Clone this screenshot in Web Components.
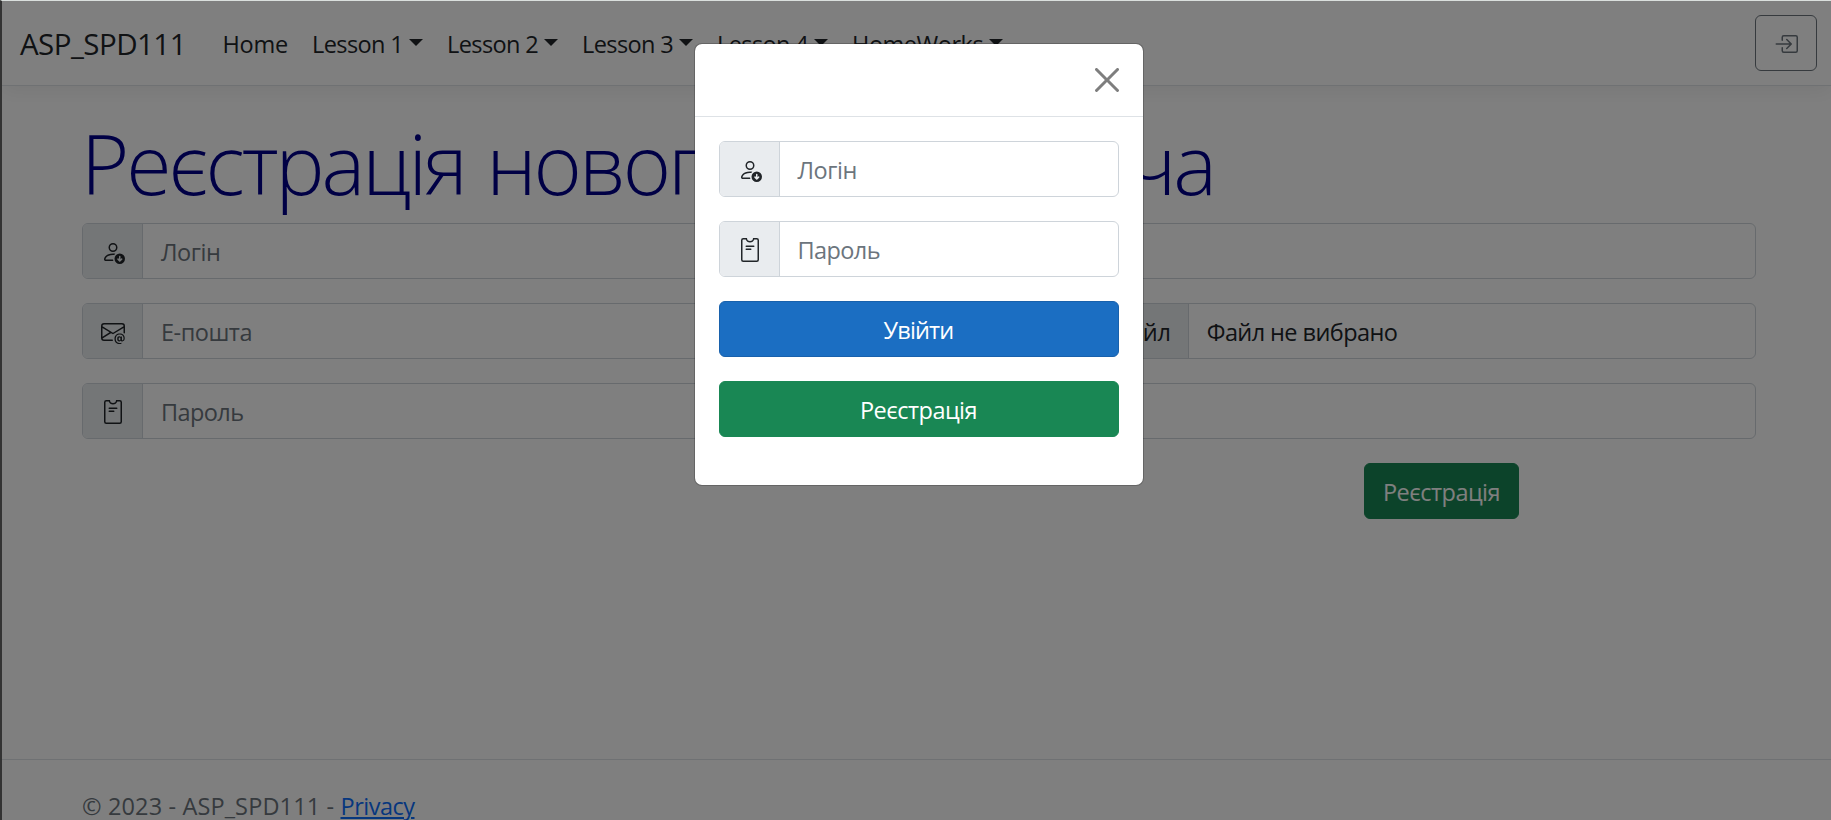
<!DOCTYPE html>
<html lang="uk">
<head>
<meta charset="utf-8">
<title>ASP_SPD111</title>
<style>
html,body{margin:0;height:100%;overflow:hidden}
body{font-family:"Open Sans","Noto Sans",sans-serif;font-size:23.5px;line-height:36px;color:#212529;background:#fff}
</style>
</head>
<body>
<app-shell></app-shell>
<script>
const define=(name,html,setup)=>customElements.define(name,class extends HTMLElement{
  constructor(){super();this.attachShadow({mode:'open'}).innerHTML=html;}
  connectedCallback(){if(setup)setup(this,this.shadowRoot);}
});

const ICONS={
 person:'<path d="M12.5 16a3.5 3.5 0 1 0 0-7 3.5 3.5 0 0 0 0 7Zm.354-1.646a.5.5 0 0 1-.722-.016l-1.149-1.25a.5.5 0 1 1 .737-.676l.28.305V11a.5.5 0 0 1 1 0v1.793l.396-.397a.5.5 0 0 1 .708.708l-1.25 1.25ZM11 5a3 3 0 1 1-6 0 3 3 0 0 1 6 0ZM8 7a2 2 0 1 0 0-4 2 2 0 0 0 0 4Z"/><path d="M8.256 14a4.474 4.474 0 0 1-.229-1.004H3c.001-.246.154-.986.832-1.664C4.484 10.68 5.711 10 8 10c.26 0 .507.009.74.025.226-.341.496-.65.804-.918C9.077 9.038 8.564 9 8 9c-5 0-6 3-6 4s1 1 1 1h5.256Z"/>',
 mail:'<path d="M2 2a2 2 0 0 0-2 2v8.01A2 2 0 0 0 2 14h5.5a.5.5 0 0 0 0-1H2a1 1 0 0 1-.966-.741l5.64-3.471L8 9.583l7-4.2V8.5a.5.5 0 0 0 1 0V4a2 2 0 0 0-2-2H2Zm3.708 6.208L1 11.105V5.383l4.708 2.825ZM1 4.217V4a1 1 0 0 1 1-1h12a1 1 0 0 1 1 1v.217l-7 4.2-7-4.2Z"/><path d="M14.247 14.269c1.01 0 1.587-.857 1.587-2.025v-.21C15.834 10.43 14.64 9 12.52 9h-.035C10.42 9 9 10.36 9 12.432v.214C9 14.82 10.438 16 12.358 16h.044c.594 0 1.018-.074 1.237-.175v-.73c-.245.11-.673.18-1.18.18h-.044c-1.334 0-2.571-.788-2.571-2.655v-.157c0-1.657 1.058-2.724 2.64-2.724h.04c1.535 0 2.484 1.05 2.484 2.326v.118c0 .975-.324 1.39-.639 1.39-.232 0-.41-.148-.41-.42v-2.19h-.906v.569h-.03c-.084-.298-.368-.63-.954-.63-.778 0-1.259.555-1.259 1.4v.528c0 .892.49 1.434 1.26 1.434.471 0 .896-.227 1.014-.643h.043c.118.42.617.648 1.12.648Zm-2.453-1.588v-.227c0-.546.227-.791.573-.791.297 0 .572.192.572.708v.367c0 .573-.253.744-.564.744-.354 0-.581-.215-.581-.8Z"/>',
 pass:'<path d="M5.5 5a.5.5 0 0 0 0 1h5a.5.5 0 0 0 0-1h-5Zm0 2a.5.5 0 0 0 0 1h3a.5.5 0 0 0 0-1h-3Z"/><path d="M8 2a2 2 0 0 0 2-2h2.5A1.5 1.5 0 0 1 14 1.5v13a1.5 1.5 0 0 1-1.5 1.5h-9A1.5 1.5 0 0 1 2 14.5v-13A1.5 1.5 0 0 1 3.5 0H6a2 2 0 0 0 2 2Zm0 1a3.001 3.001 0 0 1-2.83-2H3.5a.5.5 0 0 0-.5.5v13a.5.5 0 0 0 .5.5h9a.5.5 0 0 0 .5-.5v-13a.5.5 0 0 0-.5-.5h-1.67A3.001 3.001 0 0 1 8 3Z"/>',
 enter:'<path d="M6 3.5a.5.5 0 0 1 .5-.5h8a.5.5 0 0 1 .5.5v9a.5.5 0 0 1-.5.5h-8a.5.5 0 0 1-.5-.5v-2a.5.5 0 0 0-1 0v2A1.5 1.5 0 0 0 6.5 14h8a1.5 1.5 0 0 0 1.5-1.5v-9A1.5 1.5 0 0 0 14.5 2h-8A1.5 1.5 0 0 0 5 3.5v2a.5.5 0 0 0 1 0v-2z"/><path d="M11.854 8.354a.5.5 0 0 0 0-.708l-3-3a.5.5 0 1 0-.708.708L10.293 7.5H1.5a.5.5 0 0 0 0 1h8.793l-2.147 2.146a.5.5 0 0 0 .708.708l3-3z"/>',
 close:'<path d="M.293.293a1 1 0 0 1 1.414 0L8 6.586 14.293.293a1 1 0 1 1 1.414 1.414L9.414 8l6.293 6.293a1 1 0 0 1-1.414 1.414L8 9.414l-6.293 6.293a1 1 0 0 1-1.414-1.414L6.586 8 .293 1.707a1 1 0 0 1 0-1.414z"/>'
};

define('ui-icon','<style>:host{display:block;width:24px;height:24px}svg{display:block}</style><svg width="24" height="24" viewBox="0 0 16 16" fill="currentColor"></svg>',
 (el,r)=>{r.querySelector('svg').innerHTML=ICONS[el.getAttribute('name')];});

/* Text tracked to an exact advance width, given in pixels by the "w" attribute. */
define('fit-text','<style>:host{display:inline-block;white-space:pre}</style><slot></slot>',
 (el)=>{const w=+el.getAttribute('w');const now=el.getBoundingClientRect().width;
  el.style.letterSpacing=((w-now)/el.textContent.length)+'px';el.style.width=w+'px';});

define('nav-link',`<style>
:host{display:flex;align-items:center}
i{display:none;margin:-3px 0 0 6px;border:7.2px solid transparent;border-top-color:currentColor;border-bottom:0}
:host([menu]) i{display:block}
</style><slot></slot><i></i>`);

define('nav-bar',`<style>
:host{display:flex;align-items:center;box-sizing:border-box;height:85px;padding:0 14px 0 18px;border-bottom:1px solid #dee2e6;box-shadow:0 6px 18px rgba(0,0,0,.06);background:#fff}
.brand{font-size:29.5px;margin-right:36.5px;padding-top:1px}
nav{display:flex;gap:24px;flex:1;padding-top:2px}
.login{box-sizing:border-box;width:62px;height:56px;border:1px solid #6c757d;border-radius:6px;display:grid;place-items:center;color:#6c757d;padding-top:2px}
</style>
<span class="brand"><fit-text w="166">ASP_SPD111</fit-text></span>
<nav>
<nav-link><fit-text w="65.6">Home</fit-text></nav-link>
<nav-link menu><fit-text w="91">Lesson 1</fit-text></nav-link>
<nav-link menu><fit-text w="91">Lesson 2</fit-text></nav-link>
<nav-link menu><fit-text w="91">Lesson 3</fit-text></nav-link>
<nav-link menu><fit-text w="91">Lesson 4</fit-text></nav-link>
<nav-link menu><fit-text w="131">HomeWorks</fit-text></nav-link>
</nav>
<div class="login"><ui-icon name="enter"></ui-icon></div>`);

define('input-group',`<style>
:host{display:flex;box-sizing:border-box;height:56px;border:1px solid #ced4da;border-radius:6px;overflow:hidden;background:#fff}
.addon{display:flex;align-items:center;padding:1px 17px 0 18px;background:#e9ecef;border-right:1px solid #ced4da;color:#212529}
.field{flex:1;padding:10px 18px 8px;color:#6c757d}
:host([filled]) .field{color:#212529}
</style><div class="addon"><slot name="addon"></slot></div><div class="field"><slot></slot></div>`);

define('ui-button',`<style>
:host{display:flex;align-items:center;justify-content:center;box-sizing:border-box;height:56px;padding-top:1px;border-radius:6px;border:1px solid #198754;background:#198754;color:#fff}
:host([primary]){background:#1b6ec2;border-color:#1861ac}
</style><slot></slot>`);

define('register-form',`<style>
:host{display:flex;flex-direction:column;gap:24px;padding:35px 75.5px 0 80px}
h1{margin:0 0 -24px -1px;height:102px;line-height:84px;font-size:82.5px;font-weight:300;color:darkblue;word-spacing:3px}
.row{display:grid;grid-template-columns:1fr 1fr;gap:24px}
.file{margin-left:61px}
ui-button{width:155px;margin-left:1282px}
</style>
<h1><fit-text w="1133">Реєстрація нового користувача</fit-text></h1>
<input-group><ui-icon slot="addon" name="person"></ui-icon><fit-text w="59.5">Логін</fit-text></input-group>
<div class="row">
<input-group><ui-icon slot="addon" name="mail"></ui-icon><fit-text w="91">Е-пошта</fit-text></input-group>
<input-group class="file" filled><fit-text slot="addon" w="160">Вибрати файл</fit-text><fit-text w="190.5">Файл не вибрано</fit-text></input-group>
</div>
<input-group><ui-icon slot="addon" name="pass"></ui-icon><fit-text w="82.5">Пароль</fit-text></input-group>
<ui-button><fit-text w="117">Реєстрація</fit-text></ui-button>`);

define('page-footer',`<style>
:host{display:block;box-sizing:border-box;border-top:1px solid #dee2e6;padding:34px 80px 0;height:61px;line-height:24px;color:#6c757d;white-space:nowrap}
a,a fit-text{color:#0d6efd;text-decoration:underline;text-underline-offset:2px;text-decoration-thickness:2px}
</style><fit-text w="258.5">© 2023 - ASP_SPD111 - </fit-text><a><fit-text w="74">Privacy</fit-text></a>`);

define('login-modal',`<style>
:host{display:block;box-sizing:border-box;width:450px;height:443px;border:1px solid rgba(0,0,0,.2);border-radius:8px;background:#fff;background-clip:padding-box}
header{display:flex;justify-content:flex-end;align-items:center;height:72px;padding:0 24px;border-bottom:1px solid #dee2e6}
header ui-icon{color:#000;opacity:.5}
.body{display:flex;flex-direction:column;gap:24px;padding:24px}
</style>
<header><ui-icon name="close"></ui-icon></header>
<div class="body">
<input-group><ui-icon slot="addon" name="person"></ui-icon><fit-text w="59.5">Логін</fit-text></input-group>
<input-group><ui-icon slot="addon" name="pass"></ui-icon><fit-text w="82.5">Пароль</fit-text></input-group>
<ui-button primary><fit-text w="70">Увійти</fit-text></ui-button>
<ui-button><fit-text w="117">Реєстрація</fit-text></ui-button>
</div>`);

define('app-shell',`<style>
:host{display:flex;flex-direction:column;position:relative;box-sizing:border-box;height:820px;border-left:2px solid #333;border-top:1px solid #dadfdd;overflow:hidden}
nav-bar{flex:none;position:relative}
register-form{flex:1}
page-footer{flex:none}
.backdrop{position:absolute;inset:0;background:rgba(0,0,0,.5);display:flex;justify-content:center;align-items:flex-start;padding:42px 0 0 4px}
.mark{position:absolute;left:-2px;top:800px;width:1px;height:8px;background:linear-gradient(#cfe0a8,#e8d8b0 60%,#c08060)}
</style>
<nav-bar></nav-bar>
<register-form></register-form>
<page-footer></page-footer>
<div class="backdrop"><login-modal></login-modal></div>
<div class="mark"></div>`);
</script>
</body>
</html>
